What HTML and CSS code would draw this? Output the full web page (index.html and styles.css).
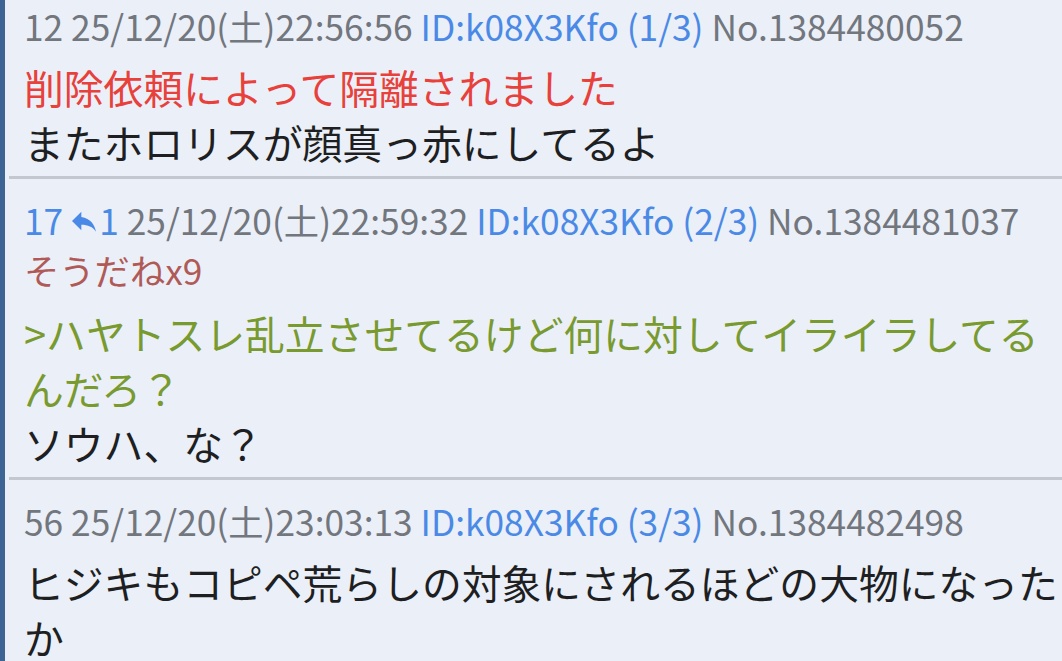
FILE: index.html
```html
<!DOCTYPE html>
<html lang="ja">
<head>
    <meta charset="UTF-8">
    <meta name="viewport" content="width=device-width, initial-scale=1.0">
    <title>スレッド</title>
    <link rel="stylesheet" href="styles.css">
</head>
<body>
    <div class="thread">

        <!-- Post 12 -->
        <div class="post">
            <div class="post-head">
                <span class="num">12</span>
                <span>25/12/20(土)22:56:56</span>
                <span class="id">ID:k08X3Kfo (1/3)</span>
                <span>No.1384480052</span>
            </div>
            <div class="post-body">
                <p class="deleted">削除依頼によって隔離されました</p>
                <p>またホロリスが顔真っ赤にしてるよ</p>
            </div>
        </div>

        <!-- Post 17 -->
        <div class="post">
            <div class="post-head">
                <span class="num reply">17<svg class="reply-icon" viewBox="0 0 24 24"><path d="M10 9V5l-7 7 7 7v-4.1c5 0 8.5 1.6 11 5.1-1-5-4-10-11-11z" fill="currentColor"/></svg>1</span>
                <span>25/12/20(土)22:59:32</span>
                <span class="id">ID:k08X3Kfo (2/3)</span>
                <span>No.1384481037</span>
            </div>
            <div class="sodane">そうだねx9</div>
            <div class="post-body">
                <p class="quote">&gt;ハヤトスレ乱立させてるけど何に対してイライラしてるんだろ？</p>
                <p>ソウハ、な？</p>
            </div>
        </div>

        <!-- Post 56 -->
        <div class="post">
            <div class="post-head">
                <span class="num">56</span>
                <span>25/12/20(土)23:03:13</span>
                <span class="id">ID:k08X3Kfo (3/3)</span>
                <span>No.1384482498</span>
            </div>
            <div class="post-body">
                <p>ヒジキもコピペ荒らしの対象にされるほどの大物になったか</p>
            </div>
        </div>

    </div>
</body>
</html>
```

FILE: styles.css
```css
* {
    margin: 0;
    padding: 0;
    box-sizing: border-box;
}

html, body {
    height: 100%;
}

body {
    font-family: "Noto Sans CJK JP", "Noto Sans", sans-serif;
    background: #ebeff8;
    color: #1e1f22;
    overflow: hidden;
}

.thread {
    min-height: 100%;
    border-left: 5px solid #3c6594;
    padding-left: 4px;
}

.post {
    padding: 17px 0 7px 15px;
    border-bottom: 3px solid #c3c7d0;
}

.post:first-child {
    padding-top: 2px;
}

.post:last-child {
    border-bottom: none;
}

.post-head {
    font-size: 35.3px;
    line-height: 48px;
    color: #72767d;
    white-space: nowrap;
}

.post-head .num.reply {
    color: #4a8ae6;
}

.reply-icon {
    width: 32px;
    height: 32px;
    margin: 0 -1px 0 5px;
    vertical-align: -2px;
}

.post-head .id {
    color: #4a8ae6;
}

.sodane {
    font-size: 35.3px;
    line-height: 52px;
    color: #b05a57;
}

.post-body {
    font-size: 39.8px;
    line-height: 55px;
    padding-top: 9px;
}

.deleted {
    color: #e8403a;
}

.quote {
    color: #789a2e;
}
```
